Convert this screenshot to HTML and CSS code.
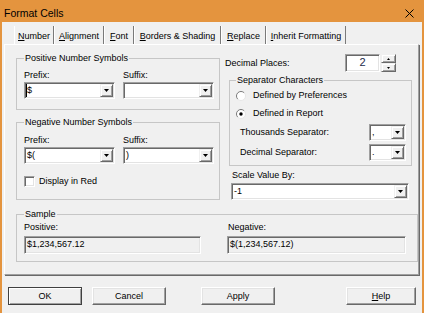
FILE: index.html
```html
<!DOCTYPE html>
<html>
<head>
<meta charset="utf-8">
<title>Format Cells</title>
<link rel="stylesheet" href="styles.css">
</head>
<body>
<div class="window">
  <div class="titlebar">
    <span class="title">Format Cells</span>
    <svg class="close" width="9" height="9" viewBox="0 0 9 9"><path d="M0.5 0.5 L8.5 8.5 M8.5 0.5 L0.5 8.5" stroke="#000" stroke-width="1" fill="none"/></svg>
  </div>
  <div class="body">
    <div class="tabs">
      <div class="tab t1"><u>N</u>umber</div>
      <div class="tab t2"><u>A</u>lignment</div>
      <div class="tab t3"><u>F</u>ont</div>
      <div class="tab t4"><u>B</u>orders &amp; Shading</div>
      <div class="tab t5"><u>R</u>eplace</div>
      <div class="tab t6"><u>I</u>nherit Formatting</div>
    </div>
    <div class="panel">
      <div class="top-row">
        <div class="left-col">
          <fieldset class="group group-pos">
            <legend>Positive Number Symbols</legend>
            <div class="pair">
              <div class="field">
                <span class="lbl">Prefix:</span>
                <div class="combo"><span class="value caret">$</span><span class="drop"><svg width="5" height="3" viewBox="0 0 5 3"><polygon points="0,0 5,0 2.5,3" fill="#000"/></svg></span></div>
              </div>
              <div class="field">
                <span class="lbl">Suffix:</span>
                <div class="combo"><span class="value"></span><span class="drop"><svg width="5" height="3" viewBox="0 0 5 3"><polygon points="0,0 5,0 2.5,3" fill="#000"/></svg></span></div>
              </div>
            </div>
          </fieldset>
          <fieldset class="group group-neg">
            <legend>Negative Number Symbols</legend>
            <div class="pair">
              <div class="field">
                <span class="lbl">Prefix:</span>
                <div class="combo"><span class="value">$(</span><span class="drop"><svg width="5" height="3" viewBox="0 0 5 3"><polygon points="0,0 5,0 2.5,3" fill="#000"/></svg></span></div>
              </div>
              <div class="field">
                <span class="lbl">Suffix:</span>
                <div class="combo"><span class="value">)</span><span class="drop"><svg width="5" height="3" viewBox="0 0 5 3"><polygon points="0,0 5,0 2.5,3" fill="#000"/></svg></span></div>
              </div>
            </div>
            <div class="check-row">
              <span class="checkbox"></span>
              <span class="lbl">Display in Red</span>
            </div>
          </fieldset>
        </div>
        <div class="right-col">
          <div class="dec-row">
            <span class="lbl">Decimal Places:</span>
            <div class="spin-field">2</div>
            <div class="spin-btns">
              <span class="spin-btn"><svg width="3" height="2" viewBox="0 0 3 2"><polygon points="1.5,0 3,2 0,2" fill="#000"/></svg></span>
              <span class="spin-btn"><svg width="3" height="2" viewBox="0 0 3 2"><polygon points="0,0 3,0 1.5,2" fill="#000"/></svg></span>
            </div>
          </div>
          <fieldset class="group group-sep">
            <legend>Separator Characters</legend>
            <div class="radio-row">
              <svg class="radio" width="10" height="10" viewBox="0 0 10 10"><circle cx="5" cy="5" r="4.5" fill="#fff"/><path d="M1.8 8.2 A4.5 4.5 0 0 1 8.2 1.8" fill="none" stroke="#7a7a7a"/><path d="M8.2 1.8 A4.5 4.5 0 0 1 1.8 8.2" fill="none" stroke="#e6e6e6"/></svg>
              <span class="lbl">Defined by Preferences</span>
            </div>
            <div class="radio-row second">
              <svg class="radio" width="10" height="10" viewBox="0 0 10 10"><circle cx="5" cy="5" r="4.5" fill="#fff"/><path d="M1.8 8.2 A4.5 4.5 0 0 1 8.2 1.8" fill="none" stroke="#7a7a7a"/><path d="M8.2 1.8 A4.5 4.5 0 0 1 1.8 8.2" fill="none" stroke="#e6e6e6"/><circle cx="5" cy="5" r="1.7" fill="#000"/></svg>
              <span class="lbl">Defined in Report</span>
            </div>
            <div class="sep-row first">
              <span class="lbl">Thousands Separator:</span>
              <div class="combo sep-combo"><span class="value">,</span><span class="drop"><svg width="5" height="3" viewBox="0 0 5 3"><polygon points="0,0 5,0 2.5,3" fill="#000"/></svg></span></div>
            </div>
            <div class="sep-row second">
              <span class="lbl">Decimal Separator:</span>
              <div class="combo sep-combo"><span class="value">.</span><span class="drop"><svg width="5" height="3" viewBox="0 0 5 3"><polygon points="0,0 5,0 2.5,3" fill="#000"/></svg></span></div>
            </div>
          </fieldset>
          <div class="scale-label">Scale Value By:</div>
          <div class="combo scale-combo"><span class="value">-1</span><span class="drop"><svg width="5" height="3" viewBox="0 0 5 3"><polygon points="0,0 5,0 2.5,3" fill="#000"/></svg></span></div>
        </div>
      </div>
      <fieldset class="group group-sample">
        <legend>Sample</legend>
        <div class="sample-row">
          <div class="sample-col sample-pos">
            <span class="lbl">Positive:</span>
            <div class="sample-field">$1,234,567.12</div>
          </div>
          <div class="sample-col sample-neg">
            <span class="lbl">Negative:</span>
            <div class="sample-field">$(1,234,567.12)</div>
          </div>
        </div>
      </fieldset>
    </div>
    <div class="buttons">
      <div class="btn btn-ok">OK</div>
      <div class="btn btn-cancel">Cancel</div>
      <div class="btn btn-apply">Apply</div>
      <div class="btn btn-help"><u>H</u>elp</div>
    </div>
  </div>
</div>
</body>
</html>
```

FILE: styles.css
```css
* { box-sizing: border-box; }
html, body { margin: 0; padding: 0; }
body {
  width: 424px;
  height: 313px;
  overflow: hidden;
  background: #f0f0f0;
  font-family: "Liberation Sans", Arial, sans-serif;
  font-size: 9px;
  line-height: 11px;
  color: #000;
}
.window {
  width: 424px;
  height: 313px;
  display: flex;
  flex-direction: column;
}
.titlebar {
  height: 22px;
  flex: none;
  background: #e4943e;
  display: flex;
  align-items: center;
  justify-content: space-between;
  padding: 4px 10px 0 4px;
}
.title { font-size: 10.5px; line-height: 13px; }
.close { display: block; }
.body {
  flex: 1;
  border-left: 2px solid #e4943e;
  border-right: 2px solid #e4943e;
  background: #f0f0f0;
}
.tabs {
  display: flex;
  height: 18px;
  margin: 4px 0 0 12px;
}
.tab {
  height: 18px;
  padding-top: 5px;
  text-align: center;
  white-space: nowrap;
  border-left: 1px solid #fff;
  border-right: 1px solid #7a7a7a;
}
.t1 { width: 40px; }
.t2 { width: 50px; }
.t3 { width: 30px; }
.t4 { width: 87px; }
.t5 { width: 45px; }
.t6 { width: 80px; }
.panel {
  margin: 0 3px 0 2px;
  border: 1px solid;
  border-color: #fff #a0a0a0 #a0a0a0 #fff;
  box-shadow: 1px 1px 0 #696969;
  padding: 8px 0 12px 11px;
}
.top-row { display: flex; align-items: flex-start; }
.left-col { width: 204px; }
.right-col { width: 187px; margin-left: 5px; }
fieldset.group {
  margin: 0;
  min-width: 0;
  border: 1px solid #c6c6c6;
}
legend { padding: 0 1px; line-height: 11px; }
.group-pos { padding: 6px 5px 10px 7px; }
.group-neg { margin-top: 7px !important; padding: 7px 5px 12px 7px; }
.pair { display: flex; gap: 8px; }
.field { width: 91px; display: flex; flex-direction: column; }
.lbl { white-space: nowrap; }
.combo {
  height: 17px;
  display: flex;
  padding: 1px;
  background: #fff;
  border: 1px solid;
  border-color: #a0a0a0 #fff #fff #a0a0a0;
  box-shadow: inset 1px 1px 0 #696969, inset -1px -1px 0 #e3e3e3;
}
.field .combo { margin-top: 1px; }
.value {
  flex: 1;
  line-height: 13px;
  padding-left: 1px;
  white-space: nowrap;
  overflow: hidden;
}
.value.caret { border-left: 1px solid #000; padding-left: 0; }
.drop {
  width: 13px;
  height: 13px;
  flex: none;
  display: flex;
  align-items: center;
  justify-content: center;
  background: #f0f0f0;
  border: 1px solid;
  border-color: #f0f0f0 #696969 #696969 #f0f0f0;
  box-shadow: inset 1px 1px 0 #fff, inset -1px -1px 0 #a0a0a0;
}
.drop svg { display: block; }
.check-row {
  margin-top: 12px;
  display: flex;
  align-items: center;
  gap: 4px;
  height: 11px;
}
.checkbox {
  width: 11px;
  height: 11px;
  background: #fff;
  border: 1px solid;
  border-color: #a0a0a0 #fff #fff #a0a0a0;
  box-shadow: inset 1px 1px 0 #696969, inset -1px -1px 0 #e3e3e3;
}
.dec-row {
  margin-top: 1px;
  height: 18px;
  display: flex;
  align-items: center;
  padding-right: 16px;
}
.dec-row .lbl { flex: 1; }
.spin-field {
  width: 35px;
  height: 18px;
  background: #fff;
  border: 1px solid;
  border-color: #a0a0a0 #fff #fff #a0a0a0;
  box-shadow: inset 1px 1px 0 #696969, inset -1px -1px 0 #e3e3e3;
  text-align: center;
  font-size: 11px;
  line-height: 15px;
  color: #1b2a4a;
}
.spin-btns { margin-left: 1px; display: flex; flex-direction: column; }
.spin-btn {
  width: 15px;
  height: 9px;
  display: flex;
  align-items: center;
  justify-content: center;
  background: #f0f0f0;
  border: 1px solid;
  border-color: #f0f0f0 #696969 #696969 #f0f0f0;
  box-shadow: inset 1px 1px 0 #fff, inset -1px -1px 0 #a0a0a0;
}
.spin-btn svg { display: block; }
.group-sep { margin: 3px 0 0 4px !important; padding: 4px 5px 4px 6px; }
.radio-row {
  display: flex;
  align-items: center;
  gap: 7px;
  height: 11px;
}
.radio-row.second { margin-top: 7px; }
.radio { display: block; flex: none; }
.sep-row {
  display: flex;
  align-items: center;
  height: 17px;
  padding-left: 4px;
}
.sep-row .lbl { flex: 1; }
.sep-row.first { margin-top: 5px; }
.sep-row.second { margin-top: 3px; }
.sep-combo { width: 37px; }
.scale-label { margin: 4px 0 0 7px; }
.scale-combo { margin: 2px 0 0 6px; width: 178px; }
.group-sample { margin-top: 9px !important; padding: 2px 5px 7px 7px; }
.sample-row { display: flex; }
.sample-col { display: flex; flex-direction: column; }
.sample-pos { width: 177px; }
.sample-neg { width: 179px; margin-left: 26px; }
.sample-neg .lbl { padding-left: 1px; }
.sample-field {
  margin-top: 3px;
  height: 18px;
  padding: 0 0 0 2px;
  background: #f0f0f0;
  border: 1px solid;
  border-color: #a0a0a0 #fff #fff #a0a0a0;
  box-shadow: inset 1px 1px 0 #696969, inset -1px -1px 0 #e3e3e3;
  line-height: 15px;
  white-space: nowrap;
}
.buttons {
  display: flex;
  margin-top: 12px;
  padding-left: 6px;
}
.btn {
  width: 74px;
  height: 18px;
  text-align: center;
  line-height: 16px;
  background: #f0f0f0;
  border: 1px solid;
  border-color: #fff #696969 #696969 #fff;
  box-shadow: inset -1px -1px 0 #a0a0a0, inset 1px 1px 0 #e3e3e3;
}
.btn-ok {
  border-color: #404040;
  box-shadow: inset 1px 1px 0 #fff, inset -1px -1px 0 #a0a0a0;
}
.btn-cancel { margin-left: 10px; }
.btn-apply { margin-left: 35px; }
.btn-help { margin-left: 71px; width: 70px; }
```
